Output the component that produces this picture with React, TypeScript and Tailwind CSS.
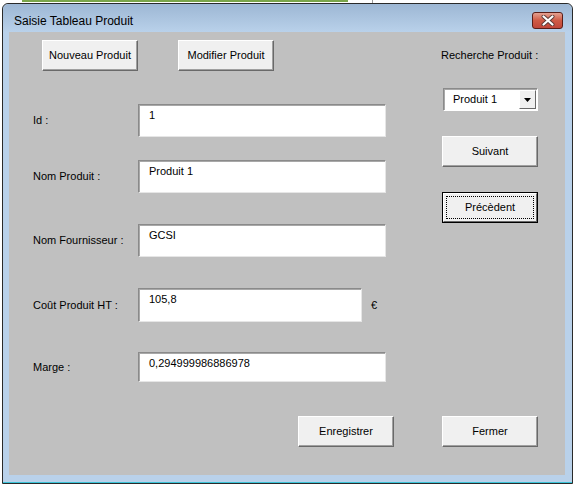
import React from "react";

const font = { fontFamily: '"Liberation Sans", Arial, sans-serif' };

function Btn({
  label,
  focused,
}: {
  label: string;
  focused?: boolean;
}) {
  if (focused) {
    return (
      <div className="w-[96px] h-[31px] border border-black">
        <div className="w-full h-full p-[2px] bg-[#f0f0f0] border border-t-white border-l-white border-r-[#696969] border-b-[#696969]">
          <div className="w-full h-full flex items-center justify-center border border-dotted border-black text-[11px] text-black">
            {label}
          </div>
        </div>
      </div>
    );
  }
  return (
    <div className="w-[96px] h-[31px] flex items-center justify-center bg-[#f0f0f0] border border-t-white border-l-white border-r-[#696969] border-b-[#696969] shadow-[inset_-1px_-1px_0_#a0a0a0] text-[11px] text-black">
      {label}
    </div>
  );
}

function TextBox({
  value,
  width,
  height,
}: {
  value: string;
  width: string;
  height: string;
}) {
  return (
    <div
      className={`${width} ${height} bg-white border border-t-[#8a8a8a] border-l-[#8a8a8a] border-r-[#e6e6e6] border-b-[#e6e6e6] shadow-[inset_1px_1px_0_#a8a8a8] pl-[10px] pt-[4px] text-[11px] leading-[13px] text-black`}
    >
      {value}
    </div>
  );
}

function Row({
  label,
  children,
  className,
}: {
  label: string;
  children: React.ReactNode;
  className: string;
}) {
  return (
    <div className={`flex items-center ${className}`}>
      <div className="w-[105px] text-[11px] text-black">{label}</div>
      {children}
    </div>
  );
}

export default function App() {
  return (
    <div className="w-[582px] h-[493px] bg-white overflow-hidden" style={font}>
      {/* window behind */}
      <div className="flex h-[3px]">
        <div className="ml-[22px] w-[326px] h-[2px] bg-[#7aa54a]" />
        <div className="ml-[24px] w-[1px] h-[3px] bg-[#9a9a9a]" />
      </div>

      <div className="ml-[2px] w-[571px] h-[481px] rounded-t-[6px] border border-[#2a2a2a] bg-[#b9d1ea] shadow-[inset_0_-1px_0_#3cc4d8]">
        {/* title bar */}
        <div className="h-[28px] flex items-start rounded-t-[6px] bg-gradient-to-b from-[#9db7d4] to-[#b9d1ea]">
          <div className="ml-[11px] mt-[10px] text-[12px] leading-[14px] text-black">
            Saisie Tableau Produit
          </div>
          <div className="ml-auto mr-[9px] mt-[8px] w-[31px] h-[17px] rounded-[3px] border border-[#5a1e18] bg-gradient-to-b from-[#e3a091] via-[#cf5a45] to-[#c0463a] flex items-center justify-center">
            <svg width="14" height="11" viewBox="0 0 14 11">
              <path
                d="M2.5 1.5 L11.5 9.5 M11.5 1.5 L2.5 9.5"
                stroke="#5a3a36"
                strokeWidth="4"
                strokeLinecap="round"
              />
              <path
                d="M2.5 1.5 L11.5 9.5 M11.5 1.5 L2.5 9.5"
                stroke="#ffffff"
                strokeWidth="2.2"
                strokeLinecap="round"
              />
            </svg>
          </div>
        </div>

        {/* client area */}
        <div className="ml-[6px] w-[556px] h-[443px] bg-[#c0c0c0] flex">
          {/* left part */}
          <div className="w-[433px] pl-[24px] pt-[8px]">
            <div className="flex gap-[40px] ml-[9px]">
              <Btn label="Nouveau Produit" />
              <Btn label="Modifier Produit" />
            </div>

            <Row label="Id :" className="mt-[33px]">
              <TextBox value="1" width="w-[248px]" height="h-[33px]" />
            </Row>
            <Row label="Nom Produit :" className="mt-[23px]">
              <TextBox value="Produit 1" width="w-[248px]" height="h-[33px]" />
            </Row>
            <Row label="Nom Fournisseur :" className="mt-[31px]">
              <TextBox value="GCSI" width="w-[248px]" height="h-[33px]" />
            </Row>
            <Row label="Coût Produit HT :" className="mt-[31px]">
              <TextBox value="105,8" width="w-[224px]" height="h-[34px]" />
              <div className="ml-[9px] text-[11px] text-black">€</div>
            </Row>
            <Row label="Marge :" className="mt-[30px]">
              <TextBox
                value="0,294999986886978"
                width="w-[248px]"
                height="h-[30px]"
              />
            </Row>

            <div className="mt-[34px] ml-[265px]">
              <Btn label="Enregistrer" />
            </div>
          </div>

          {/* right part */}
          <div className="pt-[16px]">
            <div className="-ml-[1px] h-[14px] leading-[14px] text-[11px] text-black">
              Recherche Produit :
            </div>
            <div className="mt-[26px] ml-[1px] w-[95px] h-[23px] bg-white border border-t-[#8a8a8a] border-l-[#8a8a8a] border-r-white border-b-white shadow-[inset_1px_1px_0_#a8a8a8] flex items-center">
              <div className="flex-1 pl-[9px] text-[11px] text-black">Produit 1</div>
              <div className="w-[17px] h-[19px] mr-[1px] bg-[#f0f0f0] border border-t-white border-l-white border-r-[#696969] border-b-[#696969] flex items-center justify-center">
                <svg width="7" height="4" viewBox="0 0 7 4">
                  <path d="M0 0 H7 L3.5 4 Z" fill="#000" />
                </svg>
              </div>
            </div>
            <div className="mt-[25px]">
              <Btn label="Suivant" />
            </div>
            <div className="mt-[25px]">
              <Btn label="Précèdent" focused />
            </div>
            <div className="mt-[193px]">
              <Btn label="Fermer" />
            </div>
          </div>
        </div>
      </div>
    </div>
  );
}
